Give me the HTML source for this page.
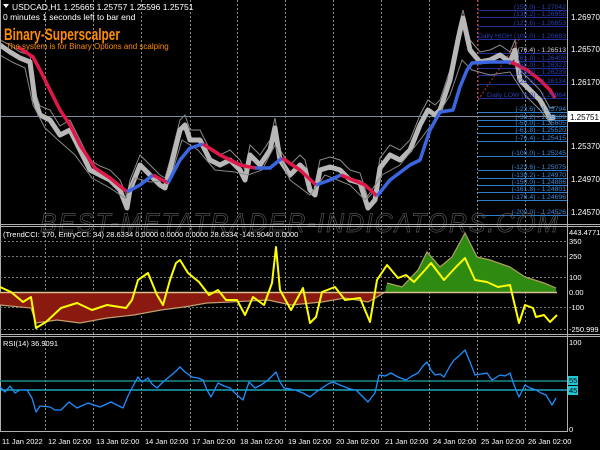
<!DOCTYPE html>
<html><head><meta charset="utf-8"><style>
html,body{margin:0;padding:0;background:#000;}
svg{display:block;font-family:"Liberation Sans",sans-serif;}
</style></head><body>
<svg width="600" height="450" viewBox="0 0 600 450" xmlns="http://www.w3.org/2000/svg">
<rect width="600" height="450" fill="#000"/>
<g stroke="#8a8a8a" stroke-width="1" stroke-dasharray="2,2">
<line x1="45.5" y1="0" x2="45.5" y2="432"/><line x1="93.5" y1="0" x2="93.5" y2="432"/>
<line x1="141.5" y1="0" x2="141.5" y2="432"/><line x1="190.5" y1="0" x2="190.5" y2="432"/>
<line x1="237.5" y1="0" x2="237.5" y2="432"/><line x1="285.5" y1="0" x2="285.5" y2="432"/>
<line x1="333.5" y1="0" x2="333.5" y2="432"/><line x1="381.5" y1="0" x2="381.5" y2="432"/>
<line x1="429.5" y1="0" x2="429.5" y2="432"/><line x1="477.5" y1="0" x2="477.5" y2="432"/>
<line x1="525.5" y1="0" x2="525.5" y2="432"/>
</g>
<g stroke="#1c2f9a" stroke-width="1">
<line x1="478" y1="10.5" x2="567" y2="10.5"/><line x1="478" y1="17.5" x2="567" y2="17.5"/>
<line x1="478" y1="26.5" x2="567" y2="26.5"/><line x1="478" y1="39.5" x2="567" y2="39.5"/>
<line x1="478" y1="53.5" x2="567" y2="53.5"/><line x1="478" y1="61.5" x2="567" y2="61.5"/>
<line x1="478" y1="68.5" x2="567" y2="68.5"/><line x1="478" y1="75.5" x2="567" y2="75.5"/>
<line x1="478" y1="84.5" x2="567" y2="84.5"/><line x1="478" y1="98.5" x2="567" y2="98.5"/>
</g>
<g stroke="#2f7fd0" stroke-width="1">
<line x1="478" y1="112.5" x2="567" y2="112.5"/><line x1="478" y1="120.5" x2="567" y2="120.5"/>
<line x1="478" y1="126.5" x2="567" y2="126.5"/><line x1="478" y1="133.5" x2="567" y2="133.5"/>
<line x1="478" y1="141.5" x2="567" y2="141.5"/><line x1="478" y1="156.5" x2="567" y2="156.5"/>
<line x1="478" y1="170.5" x2="567" y2="170.5"/><line x1="478" y1="178.5" x2="567" y2="178.5"/>
<line x1="478" y1="185.5" x2="567" y2="185.5"/><line x1="478" y1="192.5" x2="567" y2="192.5"/>
<line x1="478" y1="200.5" x2="567" y2="200.5"/><line x1="478" y1="215.5" x2="567" y2="215.5"/>
</g>
<line x1="478" y1="0" x2="478" y2="100" stroke="#c03030" stroke-dasharray="2,2"/>
<line x1="478" y1="100" x2="520" y2="38" stroke="#c03030" stroke-dasharray="2,2"/>
<line x1="0" y1="116.5" x2="567" y2="116.5" stroke="#7a8aa0" stroke-width="1"/>
<polyline fill="none" stroke="#8a8a8a" stroke-width="1" points="0,40 10,45 20,52 30,55 35,92 40,106 50,110 60,126 70,120 80,140 90,160 100,166 110,170 120,180 127,196 130,180 140,155 150,165 160,175 165,178 170,160 180,120 185,115 190,130 200,130 210,150 220,155 230,150 240,160 245,170 250,145 260,155 270,140 275,118 280,150 290,165 300,155 305,160 310,180 315,185 320,160 330,157 340,160 350,170 360,173 368,198 375,190 380,158 390,145 400,150 410,140 420,115 428,100 435,105 440,100 450,70 458,30 463,10 470,40 480,52 490,50 500,45 510,52 515,40 520,70 530,80 540,90 550,108 555,107"/>
<polyline fill="none" stroke="#b8b8b8" stroke-width="5" stroke-linejoin="round" points="0,45 10,52 20,58 30,62 35,100 40,115 50,120 60,135 70,130 80,150 90,170 100,175 110,180 120,190 127,208 130,190 140,165 150,175 160,185 165,188 170,170 180,130 185,125 190,140 200,140 210,160 220,165 230,160 240,170 245,180 250,155 260,165 270,150 275,128 280,160 290,175 300,165 305,170 310,190 315,195 320,170 330,167 340,170 350,180 360,183 368,208 375,200 380,168 390,155 400,160 410,150 420,125 428,110 435,115 440,110 450,80 458,40 463,18 470,50 480,62 490,60 500,55 510,62 515,50 520,80 530,90 540,100 550,118 555,117"/>
<polyline fill="none" stroke="#888" stroke-width="1" points="0,55 12,62 25,68 33,105 45,128 58,140 75,155 92,178 110,188 125,198 135,178 150,182 170,180 182,140 198,150 215,170 235,172 248,175 262,170 275,145 290,180 310,195 325,175 350,185 365,200 382,175 400,165 420,140 435,120 450,95 462,60 472,70 490,75 510,72 525,95 540,110 552,125"/>
<g fill="none" stroke-width="3.5" stroke-linejoin="round">
<polyline stroke="#e0184a" points="18,47 33,57 40,70 50,90 60,110 70,125 80,145 95,168 110,178 127,192"/>
<polyline stroke="#3a66e0" points="127,192 140,185 153,175"/>
<polyline stroke="#e0184a" points="153,175 168,183"/>
<polyline stroke="#3a66e0" points="168,183 180,160 190,148 203,144"/>
<polyline stroke="#e0184a" points="203,144 220,155 240,165 255,168"/>
<polyline stroke="#3a66e0" points="255,168 270,168 282,158"/>
<polyline stroke="#e0184a" points="282,158 300,170 316,185"/>
<polyline stroke="#3a66e0" points="316,185 330,180 341,175"/>
<polyline stroke="#e0184a" points="341,175 365,185 377,196"/>
<polyline stroke="#3a66e0" points="377,196 390,180 410,165 420,160 430,130 440,112 453,110 460,87 467,70 472,63 490,62 511,62"/>
<polyline stroke="#e0184a" points="511,62 527,70 540,80 550,90 555,98"/>
</g>
<g font-size="6.8" fill="#2a3fb0" text-anchor="end" font-family="Liberation Sans Narrow, Liberation Sans, sans-serif">
<text x="566" y="9">(150.0) - 1.27042</text><text x="566" y="16">(138.2) - 1.26958</text>
<text x="566" y="25">(123.6) - 1.26853</text><text x="566" y="38">Daily HIGH (100.0) - 1.26683</text>
<text x="566" y="52" fill="#ccd">(76.4) - 1.26513</text><text x="566" y="60">(61.8) - 1.26408</text>
<text x="566" y="67">(50.0) - 1.26323</text><text x="566" y="74">(38.2) - 1.26239</text>
<text x="566" y="83">(23.6) - 1.26134</text><text x="566" y="97">Daily LOW (0.0) - 1.25964</text>
</g>
<g font-size="6.8" fill="#3a8ad8" text-anchor="end" font-family="Liberation Sans Narrow, Liberation Sans, sans-serif">
<text x="566" y="111">(-23.6) - 1.25794</text><text x="566" y="119">(-38.2) - 1.25689</text>
<text x="566" y="125">(-50.0) - 1.25605</text><text x="566" y="132">(-61.8) - 1.25520</text>
<text x="566" y="140">(-76.4) - 1.25415</text><text x="566" y="155">(-100.0) - 1.25245</text>
<text x="566" y="169">(-123.6) - 1.25075</text><text x="566" y="177">(-138.2) - 1.24970</text>
<text x="566" y="184">(-150.0) - 1.24886</text><text x="566" y="191">(-161.8) - 1.24801</text>
<text x="566" y="199">(-176.4) - 1.24696</text><text x="566" y="214">(-200.0) - 1.24526</text>
</g>
<text x="300" y="232" text-anchor="middle" font-size="27" font-style="italic" fill="none" stroke="#555" stroke-width="0.7" letter-spacing="2" textLength="520" lengthAdjust="spacingAndGlyphs">BEST-METATRADER-INDICATORS.COM</text>
<polygon points="3,4 9,4 6,8" fill="#fff"/>
<text x="12" y="10" font-size="8.5" fill="#fff">USDCAD,H1  1.25665 1.25757 1.25596 1.25751</text>
<text x="3" y="20" font-size="8.5" fill="#fff">0 minutes 1 seconds left to bar end</text>
<text x="4" y="40" font-size="17" font-weight="bold" fill="#ff8c00" font-family="Liberation Sans Narrow, Liberation Sans, sans-serif" textLength="116" lengthAdjust="spacingAndGlyphs">Binary-Superscalper</text>
<text x="6" y="49" font-size="8" fill="#ff8c00">The system is  for Binary Options and scalping</text>
<g stroke="#b0b0b0" stroke-width="1" fill="none">
<line x1="0" y1="224.5" x2="600" y2="224.5"/><line x1="0" y1="226.5" x2="600" y2="226.5"/>
<line x1="0" y1="334.5" x2="600" y2="334.5"/><line x1="0" y1="336.5" x2="600" y2="336.5"/>
<line x1="0" y1="431.5" x2="567" y2="431.5"/>
<line x1="567.5" y1="0" x2="567.5" y2="432"/>
<line x1="0.5" y1="0" x2="0.5" y2="432"/>
</g>
<g font-size="8" fill="#fff">
<text x="571" y="20">1.26970</text><text x="571" y="52">1.26570</text><text x="571" y="85">1.26170</text>
<text x="571" y="149">1.25370</text><text x="571" y="182">1.24970</text><text x="571" y="215">1.24570</text>
</g>
<rect x="568" y="111" width="32" height="11" fill="#fff"/>
<text x="570" y="120" font-size="8" fill="#000">1.25751</text>
<g stroke="#777" stroke-dasharray="2,2"><line x1="0" y1="241.5" x2="567" y2="241.5"/><line x1="0" y1="256.5" x2="567" y2="256.5"/><line x1="0" y1="277.5" x2="567" y2="277.5"/><line x1="0" y1="307.5" x2="567" y2="307.5"/><line x1="0" y1="329.5" x2="567" y2="329.5"/></g>
<polygon fill="#8a1a10" points="0,292 0,305 31,308 36,323 57,320 80,323 107,318 134,315 161,310 184,307 207,303 230,302 268,300 291,305 322,302 345,298 368,302 377,297 385,292"/>
<polyline fill="none" stroke="#c0a070" stroke-width="1.2" points="0,305 31,308 36,323 57,320 80,323 107,318 134,315 161,310 184,307 207,303 230,302 268,300 291,305 322,302 345,298 368,302 377,297 385,292"/>
<polygon fill="#2e8a10" points="385,292 387,283 402,287 418,270 427,252 440,267 452,257 465,233 477,257 490,260 510,267 525,277 544,283 556,288 556,292"/>
<polyline fill="none" stroke="#b0a060" stroke-width="1.2" points="387,283 402,287 418,270 427,252 440,267 452,257 465,233 477,257 490,260 510,267 525,277 544,283 556,288"/>
<line x1="0" y1="292.5" x2="557" y2="292.5" stroke="#d8c090" stroke-width="1.5"/>
<polyline fill="none" stroke="#ffff00" stroke-width="2" stroke-linejoin="round" points="0,287 11,292 23,302 31,297 36,328 46,322 61,308 77,303 92,310 107,305 126,308 132,300 138,280 148,273 157,295 163,305 170,280 176,263 180,260 188,273 199,282 209,295 218,290 226,300 237,300 245,315 253,297 264,305 272,283 276,247 280,290 291,310 303,288 310,323 316,317 322,292 335,287 345,300 360,298 370,322 377,280 387,265 398,278 406,275 414,282 425,270 431,263 444,280 456,267 465,258 475,280 487,282 498,287 510,285 519,323 525,305 533,308 536,317 544,315 550,322 557,315"/>
<text x="3" y="237" font-size="7.5" fill="#fff">(TrendCCI: 170, EntryCCI: 34)  28.6334 0.0000 0.0000 0.0000 28.6334 -145.9040 0.0000</text>
<g font-size="7.5" fill="#fff">
<text x="569" y="235">443.4771</text><text x="569" y="244">350</text><text x="569" y="259">250</text>
<text x="569" y="280">100</text><text x="569" y="295">0.00</text><text x="569" y="310">-100</text>
<text x="569" y="332">-250.999</text>
</g>
<line x1="0" y1="381" x2="567" y2="381" stroke="#1a8a8a" stroke-width="1.5"/>
<line x1="0" y1="390" x2="567" y2="390" stroke="#20c8d8" stroke-width="1.2"/>
<polyline fill="none" stroke="#1e8fff" stroke-width="1.3" stroke-linejoin="round" points="0,387 5,392 10,386 15,393 20,390 27,390 32,398 36,412 40,406 50,407 55,410 61,410 69,402 77,408 88,403 100,407 111,402 117,405 123,408 128,396 132,388 138,377 142,382 148,378 152,384 157,388 163,382 169,377 175,372 180,367 185,372 192,377 198,378 203,380 207,390 211,397 218,383 224,386 230,388 237,395 243,400 249,382 255,388 261,385 268,380 276,372 280,382 284,388 290,389 295,390 303,393 310,397 316,392 322,388 328,384 333,382 340,385 345,387 350,389 356,390 362,396 368,402 375,393 379,375 385,376 391,373 398,377 406,380 412,376 418,373 423,366 427,362 431,370 435,375 440,374 444,377 450,366 454,360 460,355 465,350 470,362 475,375 481,374 487,373 492,380 500,375 505,376 510,373 514,385 519,397 525,385 530,388 536,390 541,393 546,395 552,405 556,398"/>
<text x="3" y="346" font-size="7.5" fill="#fff">RSI(14) 36.9091</text>
<g font-size="7.5" fill="#fff"><text x="569" y="345">100</text><text x="569" y="432">0</text></g>
<rect x="568" y="376" width="10" height="9" fill="#20c8d8"/><text x="569" y="383" font-size="7.5" fill="#000">55</text>
<rect x="568" y="386" width="10" height="9" fill="#20c8d8"/><text x="569" y="393" font-size="7.5" fill="#000">45</text>
<g font-size="7.5" fill="#fff">
<text x="2" y="444">11 Jan 2022</text><text x="48" y="444">12 Jan 02:00</text><text x="96" y="444">13 Jan 02:00</text>
<text x="145" y="444">14 Jan 02:00</text><text x="192" y="444">17 Jan 02:00</text><text x="240" y="444">18 Jan 02:00</text>
<text x="288" y="444">19 Jan 02:00</text><text x="336" y="444">20 Jan 02:00</text><text x="385" y="444">21 Jan 02:00</text>
<text x="433" y="444">24 Jan 02:00</text><text x="481" y="444">25 Jan 02:00</text><text x="528" y="444">26 Jan 02:00</text>
</g>
</svg>
</body></html>
